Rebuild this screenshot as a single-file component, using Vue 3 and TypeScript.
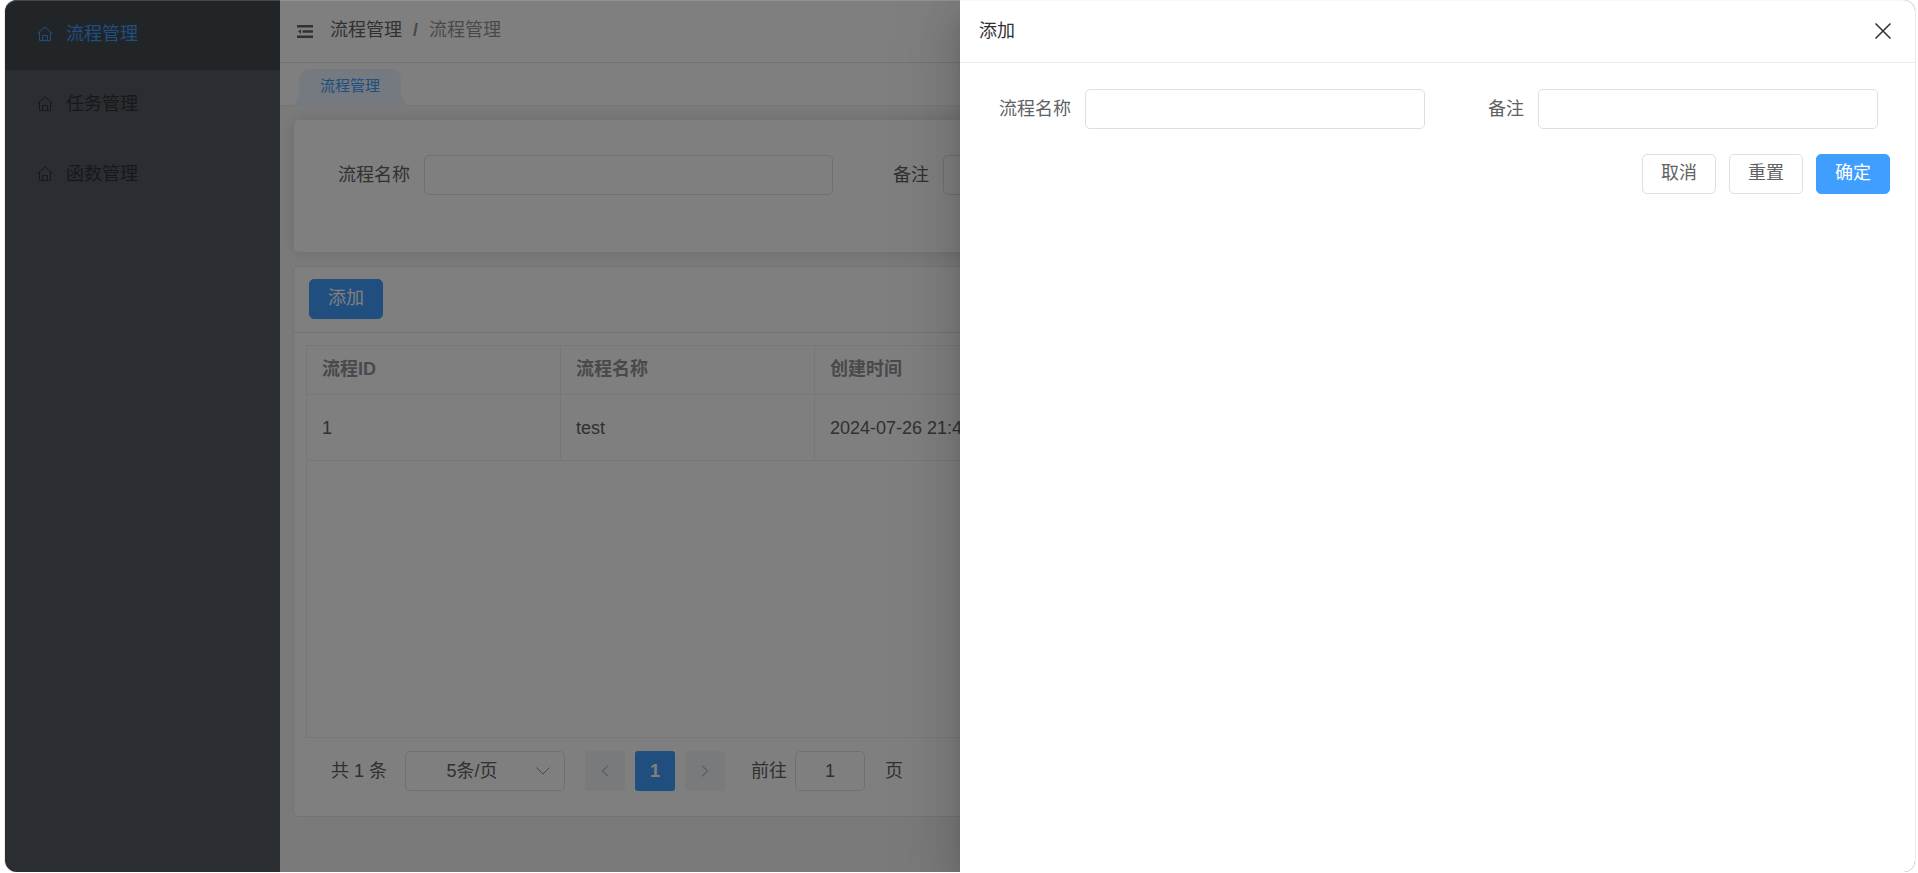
<script setup lang="ts">
import { ref } from 'vue'

interface Flow {
  id: number
  name: string
  createdAt: string
}

const menu = ['流程管理', '任务管理', '函数管理']
const active = ref('流程管理')
const columns = ['流程ID', '流程名称', '创建时间']
const rows: Flow[] = [{ id: 1, name: 'test', createdAt: '2024-07-26 21:44' }]
const query = ref({ name: '', remark: '' })
const form = ref({ name: '', remark: '' })
const pageSize = ref('5')
const page = ref('1')

function reset() {
  form.value = { name: '', remark: '' }
}
</script>

<template>
  <div class="window">
    <aside class="sidebar">
      <nav>
        <a v-for="item in menu" :key="item" href="#" class="menu-item" :class="{ active: item === active }">
          <svg class="house" viewBox="0 0 16 16" aria-hidden="true">
            <path d="M.5 7.5 8 .9l7.500 6.600M2.500 6v8.600h11V6M5.600 14.600V9.500h4.800v5.100" />
          </svg>
          <span>{{ item }}</span>
        </a>
      </nav>
    </aside>

    <main class="main">
      <header class="topbar">
        <button class="fold" type="button" aria-label="fold">
          <svg viewBox="0 0 16 13" aria-hidden="true">
            <path d="M0 0h16v2.500H0zM5.500 5.200H16v2.500H5.500zM0 10.500h16V13H0zM4 4.200v4.600L1 6.500z" />
          </svg>
        </button>
        <nav class="crumbs">
          <a href="#">流程管理</a>
          <b>/</b>
          <span>流程管理</span>
        </nav>
      </header>
      <div class="tabs">
        <a href="#" class="tab">流程管理</a>
      </div>

      <div class="content">
        <form class="search">
          <div class="field">
            <label for="q-name">流程名称</label>
            <input id="q-name" v-model="query.name" type="text" />
          </div>
          <div class="field">
            <label for="q-remark">备注</label>
            <input id="q-remark" v-model="query.remark" type="text" />
          </div>
        </form>

        <section class="panel">
          <div class="panel-head">
            <button class="btn primary" type="button">添加</button>
          </div>
          <div class="panel-body">
            <div class="table-box">
              <table>
                <thead>
                  <tr>
                    <th v-for="c in columns" :key="c">{{ c }}</th>
                  </tr>
                </thead>
                <tbody>
                  <tr v-for="r in rows" :key="r.id">
                    <td>{{ r.id }}</td>
                    <td>{{ r.name }}</td>
                    <td>{{ r.createdAt }}</td>
                  </tr>
                </tbody>
              </table>
            </div>
            <div class="pager">
              <span class="total">共 1 条</span>
              <div class="size">
                <select v-model="pageSize" aria-label="page size">
                  <option value="5">5条/页</option>
                </select>
                <svg viewBox="0 0 14 8" aria-hidden="true"><path d="M.5.500 7 7 13.500.500" /></svg>
              </div>
              <div class="pages">
                <button class="step" type="button" aria-label="previous">
                  <svg viewBox="0 0 8 12" aria-hidden="true"><path d="M7 .500 1.500 6 7 11.500" /></svg>
                </button>
                <button class="step current" type="button">1</button>
                <button class="step" type="button" aria-label="next">
                  <svg viewBox="0 0 8 12" aria-hidden="true"><path d="M1 .500 6.500 6 1 11.500" /></svg>
                </button>
              </div>
              <label for="goto">前往</label>
              <input id="goto" v-model="page" class="goto" type="text" />
              <span>页</span>
            </div>
          </div>
        </section>
      </div>
    </main>

    <div class="mask">
      <section class="drawer" role="dialog" aria-labelledby="drawer-title">
        <header class="drawer-head">
          <span id="drawer-title">添加</span>
          <button class="close" type="button" aria-label="close">
            <svg viewBox="0 0 16 16" aria-hidden="true"><path d="M.5.500l15 15M15.500.500l-15 15" /></svg>
          </button>
        </header>
        <form class="drawer-form" @submit.prevent>
          <div class="fields">
            <div class="field">
              <label for="f-name">流程名称</label>
              <input id="f-name" v-model="form.name" type="text" />
            </div>
            <div class="field">
              <label for="f-remark">备注</label>
              <input id="f-remark" v-model="form.remark" type="text" />
            </div>
          </div>
          <div class="actions">
            <button class="btn" type="button">取消</button>
            <button class="btn" type="button" @click="reset">重置</button>
            <button class="btn primary" type="submit">确定</button>
          </div>
        </form>
      </section>
    </div>
  </div>
</template>

<style>
body {
  background: #fff;
}
</style>

<style scoped>
* {
  box-sizing: border-box;
}
.window {
  position: relative;
  display: flex;
  height: calc(100vh - 1px);
  margin: 0 3px 0 5px;
  overflow: hidden;
  border-radius: 12px;
  box-shadow: 0 0 0 1px #ebebeb;
  font-family: "Liberation Sans", "Noto Sans CJK SC", sans-serif;
  font-size: 18px;
  line-height: 26px;
  color: #606266;
}
.window::after {
  content: "";
  position: absolute;
  inset: 0;
  border-radius: 12px;
  box-shadow: inset 0 1px 0 rgba(220, 220, 220, 0.2);
  pointer-events: none;
}
a {
  color: inherit;
  text-decoration: none;
}
button,
input,
select {
  font: inherit;
  color: inherit;
}
.sidebar {
  flex: 0 0 275px;
  background: #545c64;
}
.menu-item {
  display: flex;
  align-items: center;
  gap: 13px;
  height: 70px;
  padding: 0 32px 2px;
  color: #303133;
}
.menu-item.active {
  background: #434a50;
  color: #409eff;
}
.house {
  width: 16px;
  height: 16px;
  fill: none;
  stroke: currentColor;
}
.main {
  flex: 1;
  min-width: 0;
  display: flex;
  flex-direction: column;
  background: #f5f5f5;
}
.topbar {
  display: flex;
  align-items: center;
  height: 63px;
  padding: 0 17px 2px;
  background: #fff;
  border-bottom: 1px solid #e4e7ed;
}
.fold {
  display: flex;
  margin-top: 2px;
  padding: 0;
  border: 0;
  background: none;
}
.fold svg {
  width: 16px;
  height: 13px;
  fill: #606266;
}
.crumbs {
  display: flex;
  gap: 11px;
  padding-left: 17px;
  color: #909399;
}
.crumbs a {
  color: #606266;
}
.tabs {
  display: flex;
  align-items: flex-end;
  height: 43px;
  padding: 0 19px;
  background: #fff;
  border-bottom: 1px solid #ebeef5;
}
.tab {
  position: relative;
  height: 36px;
  padding: 0 21px;
  border-radius: 10px 10px 0 0;
  background: #e8f4ff;
  color: #409eff;
  font-size: 15px;
  line-height: 34px;
}
.tab::before,
.tab::after {
  content: "";
  position: absolute;
  bottom: 0;
  width: 5px;
  height: 10px;
  background: #e8f4ff;
}
.tab::before {
  right: 100%;
  clip-path: polygon(100% 0, 100% 100%, 0 100%);
}
.tab::after {
  left: 100%;
  clip-path: polygon(0 0, 100% 100%, 0 100%);
}
.content {
  flex: 1;
  padding: 14px 14px 0 13px;
}
.search {
  display: grid;
  grid-template-columns: repeat(3, 1fr);
  height: 132px;
  margin-left: 1px;
  padding: 35px 25px;
  border-radius: 5px;
  background: #fff;
  box-shadow: 0 0 15px rgba(0, 0, 0, 0.12);
}
.field {
  display: flex;
  height: 40px;
  padding-right: 5px;
}
.field label {
  flex: 0 0 105px;
  padding-right: 14px;
  text-align: right;
  line-height: 40px;
}
.field input,
.goto {
  min-width: 0;
  height: 40px;
  border: 1px solid #dcdfe6;
  border-radius: 5px;
  background: #fff;
  outline: none;
}
.field input {
  flex: 1;
  padding: 0 14px;
}
.panel {
  margin-top: 14px;
  border: 1px solid #e4e7ed;
  border-radius: 5px;
  background: #fff;
}
.panel-head {
  height: 66px;
  padding: 12px 15px;
  border-bottom: 1px solid #e4e7ed;
}
.btn {
  width: 74px;
  height: 40px;
  padding: 0 0 2px;
  border: 1px solid #dcdfe6;
  border-radius: 5px;
  background: #fff;
}
.btn.primary {
  border-color: #409eff;
  background: #409eff;
  color: #fff;
}
.panel-body {
  padding: 12px 12px 25px;
}
.table-box {
  height: 393px;
  border: 1px solid #ebeef5;
}
table {
  width: 100%;
  border-collapse: separate;
  border-spacing: 0;
  table-layout: fixed;
}
th,
td {
  padding: 0 15px;
  border-right: 1px solid #ebeef5;
  border-bottom: 1px solid #ebeef5;
  text-align: left;
}
th {
  height: 49px;
  padding-bottom: 2px;
  color: #909399;
}
td {
  height: 66px;
}
th:first-child,
th:nth-child(2) {
  width: 254px;
}
th:last-child,
td:last-child {
  border-right: 0;
}
.pager {
  display: flex;
  align-items: center;
  margin-top: 13px;
  padding-left: 25px;
}
.size {
  position: relative;
  margin: 0 20px 0 18px;
}
.size select {
  display: block;
  appearance: none;
  width: 160px;
  height: 40px;
  padding: 0 46px 0 20px;
  border: 1px solid #dcdfe6;
  border-radius: 5px;
  background: #fff;
  text-align: center;
  text-align-last: center;
}
.size svg {
  position: absolute;
  top: 16px;
  right: 15px;
  width: 14px;
  height: 8px;
  fill: none;
  stroke: #909399;
}
.pages {
  display: flex;
  gap: 10px;
  margin-right: 26px;
}
.step {
  display: grid;
  place-items: center;
  width: 40px;
  height: 40px;
  padding: 0;
  border: 0;
  border-radius: 3px;
  background: #f2f5f9;
}
.step svg {
  width: 8px;
  height: 12px;
  fill: none;
  stroke: #909399;
}
.step.current {
  background: #409eff;
  color: #fff;
  font-weight: 700;
}
.goto {
  width: 70px;
  margin: 0 20px 0 8px;
  text-align: center;
}
.mask {
  position: absolute;
  inset: 0;
  display: flex;
  justify-content: flex-end;
  background: rgba(0, 0, 0, 0.5);
}
.drawer {
  width: 50%;
  background: #fff;
  box-shadow: 0 20px 60px 20px rgba(0, 0, 0, 0.08), 0 15px 40px rgba(0, 0, 0, 0.12),
    0 10px 20px -10px rgba(0, 0, 0, 0.16);
}
.drawer-head {
  display: flex;
  align-items: center;
  justify-content: space-between;
  height: 63px;
  padding: 0 24px 0 19px;
  border-bottom: 1px solid #ebebed;
  color: #303133;
}
.close {
  display: flex;
  padding: 0;
  border: 0;
  background: none;
}
.close svg {
  width: 16px;
  height: 16px;
  fill: none;
  stroke: #303133;
  stroke-width: 1.500;
}
.drawer-form {
  padding: 26px 25px 0 20px;
}
.fields {
  display: grid;
  grid-template-columns: 1fr 1fr;
  padding-right: 4px;
}
.fields .field {
  padding-right: 8px;
}
.actions {
  display: flex;
  justify-content: flex-end;
  gap: 13px;
  margin-top: 25px;
}
</style>
